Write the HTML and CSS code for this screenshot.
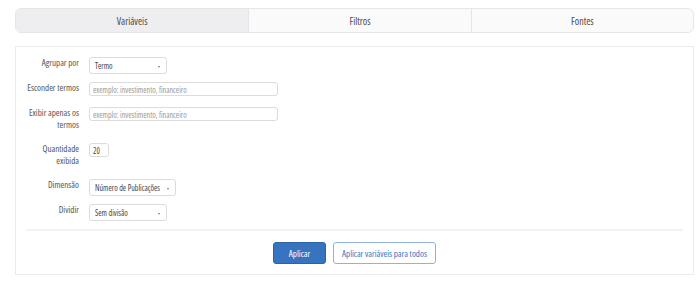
FILE: index.html
```html
<!DOCTYPE html>
<html lang="pt">
<head>
  <meta charset="utf-8">
  <title>Variáveis</title>
  <link rel="stylesheet" href="styles.css">
</head>
<body>
  <nav class="tabs">
    <div class="tab active">Variáveis</div>
    <div class="tab">Filtros</div>
    <div class="tab">Fontes</div>
  </nav>

  <section class="panel">
    <div class="row">
      <label class="row-label">Agrupar por</label>
      <div class="select w-77"><span>Termo</span><i class="caret"></i></div>
    </div>
    <div class="row">
      <label class="row-label">Esconder termos</label>
      <div class="input w-188"><span class="placeholder">exemplo: investimento, financeiro</span></div>
    </div>
    <div class="row">
      <label class="row-label">Exibir apenas os termos</label>
      <div class="input w-188"><span class="placeholder">exemplo: investimento, financeiro</span></div>
    </div>
    <div class="row">
      <label class="row-label">Quantidade exibida</label>
      <div class="input w-19"><span>20</span></div>
    </div>
    <div class="row">
      <label class="row-label">Dimensão</label>
      <div class="select w-86"><span>Número de Publicações</span><i class="caret"></i></div>
    </div>
    <div class="row">
      <label class="row-label">Dividir</label>
      <div class="select w-77"><span>Sem divisão</span><i class="caret"></i></div>
    </div>

    <hr class="divider">

    <div class="actions">
      <button class="btn btn-primary">Aplicar</button>
      <button class="btn btn-outline">Aplicar variáveis para todos</button>
    </div>
  </section>
</body>
</html>
```

FILE: styles.css
```css
html, body {
  margin: 0;
  background: #fff;
}

body {
  padding: 8px 6px 0 15px;
  font-family: "Open Sans", "DejaVu Sans Condensed", sans-serif;
  font-stretch: 75%;
  font-size: 9px;
  color: #555;
}

.tabs {
  display: grid;
  grid-template-columns: 233fr 223fr 223fr;
  height: 25px;
  border: 1px solid #e6e6e9;
  border-radius: 6px;
  overflow: hidden;
  box-sizing: border-box;
  background: #fafafa;
}

.tab {
  display: flex;
  align-items: center;
  justify-content: center;
  font-size: 10px;
  color: #4a4a4a;
}

.tab + .tab {
  border-left: 1px solid #e6e6e9;
}

.tab.active {
  background: #eeeef1;
}

.panel {
  margin-top: 13px;
  border: 1px solid #ebebeb;
  padding: 10px 10px 10px;
  box-sizing: border-box;
}

.row {
  display: flex;
  align-items: flex-start;
  min-height: 17px;
  margin-bottom: 8px;
}

.row-label {
  width: 53px;
  margin-right: 10px;
  text-align: right;
  line-height: 12px;
  padding-bottom: 4px;
  color: #555;
}

.select, .input {
  box-sizing: border-box;
  border: 1px solid #dcdcdc;
  border-radius: 3px;
  display: flex;
  align-items: center;
  background: #fff;
  color: #444;
  white-space: nowrap;
}

.select {
  height: 17px;
  padding: 0 6px 0 5px;
  justify-content: space-between;
  font-size: 8px;
}

.input {
  height: 14px;
  padding: 0 3px;
  font-size: 8px;
}

.placeholder {
  color: #999;
}

.caret {
  width: 0;
  height: 0;
  border-left: 1.5px solid transparent;
  border-right: 1.5px solid transparent;
  border-top: 2px solid #777;
  margin-top: 2px;
}

.w-77 { width: 78px; }
.w-86 { width: 87px; }
.w-188 { width: 189px; }
.w-19 { width: 20px; }

.divider {
  border: 0;
  border-top: 2px solid #f2f2f2;
  margin: 5px 0 11px;
}

.actions {
  display: flex;
  justify-content: center;
  gap: 7px;
}

.btn {
  height: 22px;
  border-radius: 3px;
  font-family: inherit;
  font-stretch: inherit;
  font-size: 9px;
  padding: 0;
  cursor: pointer;
}

.btn-primary {
  width: 53px;
  background: #3674bf;
  border: 1px solid #2d62a5;
  color: #fff;
}

.btn-outline {
  width: 103px;
  background: #fff;
  border: 1px solid #8fb2e3;
  color: #3a74c0;
}
```
